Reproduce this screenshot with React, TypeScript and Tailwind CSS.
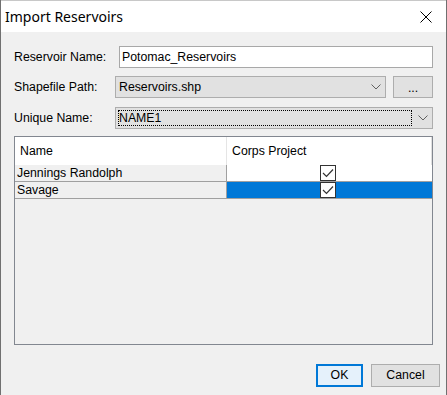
import React from "react";

const Chevron = () => (
  <svg width="10" height="6" viewBox="0 0 10 6" className="shrink-0">
    <path d="M0.5 0.5 L5 5 L9.5 0.5" fill="none" stroke="#606060" strokeWidth="1" />
  </svg>
);

const CheckBox = () => (
  <div className="w-[16px] h-[16px] bg-white border border-[#333333] flex items-center justify-center">
    <svg width="12" height="10" viewBox="0 0 12 10">
      <path d="M1 5 L4.5 8.5 L11 1.5" fill="none" stroke="#333333" strokeWidth="1.2" />
    </svg>
  </div>
);

const rows = [
  { name: "Jennings Randolph", selected: false },
  { name: "Savage", selected: true },
];

export default function App() {
  return (
    <div
      className="w-[447px] h-[395px] bg-[#f0f0f0] border-x border-[#707070] flex flex-col text-[12.3px] text-black"
      style={{ fontFamily: '"Liberation Sans", Arial, sans-serif' }}
    >
      {/* title bar */}
      <div className="h-[32px] bg-white flex items-center justify-between pl-[4px] pr-[14px] border-t border-[#c8c8c8]">
        <span className="text-[14px] leading-none" style={{ fontFamily: '"Noto Sans", sans-serif' }}>
          Import Reservoirs
        </span>
        <svg width="12" height="12" viewBox="0 0 12 12">
          <path d="M0.5 0.5 L11.5 11.5 M11.5 0.5 L0.5 11.5" stroke="#000" strokeWidth="1" />
        </svg>
      </div>

      <div className="flex flex-col px-[13px] pt-[14px]">
        <div className="flex items-center h-[22px]">
          <span className="w-[105px] shrink-0">Reservoir Name:</span>
          <div className="flex-1 h-[22px] bg-white border border-[#a8a8a8] flex items-center pl-[2px]">
            Potomac_Reservoirs
          </div>
        </div>

        <div className="flex items-center h-[22px] mt-[8px]">
          <span className="w-[101px] shrink-0">Shapefile Path:</span>
          <div className="w-[271px] h-[22px] bg-[#e1e1e1] border border-[#adadad] flex items-center justify-between pl-[3px] pr-[4px]">
            <span>Reservoirs.shp</span>
            <Chevron />
          </div>
          <div className="ml-[7px] flex-1 h-[22px] bg-[#e1e1e1] border border-[#adadad] flex items-center justify-center pt-[3px]">
            ...
          </div>
        </div>

        <div className="flex items-center h-[22px] mt-[9px]">
          <span className="w-[101px] shrink-0">Unique Name:</span>
          <div className="flex-1 h-[22px] bg-[#e1e1e1] border border-[#adadad] flex items-center pl-[2px] pr-[4px] gap-[6px]">
            <div className="flex-1 h-[16px] border border-dotted border-black flex items-center">NAME1</div>
            <Chevron />
          </div>
        </div>

        {/* grid */}
        <div className="mt-[7px] h-[209px] border border-[#828790] bg-[#f0f0f0] flex flex-col">
          <div className="flex h-[28px] bg-white pr-[1px] border-r border-[#e0e0e0]">
            <div className="w-[212px] border-r border-[#e5e5e5] flex items-center pl-[5px]">Name</div>
            <div className="flex-1 flex items-center pl-[5px]">Corps Project</div>
          </div>
          {rows.map((r) => (
            <div key={r.name} className="flex h-[17px] border-b border-[#a0a0a0]">
              <div className="w-[212px] border-r border-[#a0a0a0] flex items-center pl-[2px] bg-[#f0f0f0]">
                {r.name}
              </div>
              <div
                className={
                  r.selected
                    ? "flex-1 flex items-end justify-center bg-[#0078d7] pr-[3px]"
                    : "flex-1 flex items-end justify-center bg-white pr-[3px]"
                }
              >
                <CheckBox />
              </div>
            </div>
          ))}
        </div>

        {/* buttons */}
        <div className="flex justify-end gap-[8px] mt-[19px] -mr-[7px]">
          <div className="w-[47px] h-[23px] bg-[#e5f1fb] border-2 border-[#0078d7] flex items-center justify-center">
            OK
          </div>
          <div className="w-[69px] h-[23px] bg-[#e1e1e1] border border-[#adadad] flex items-center justify-center">
            Cancel
          </div>
        </div>
      </div>
    </div>
  );
}
